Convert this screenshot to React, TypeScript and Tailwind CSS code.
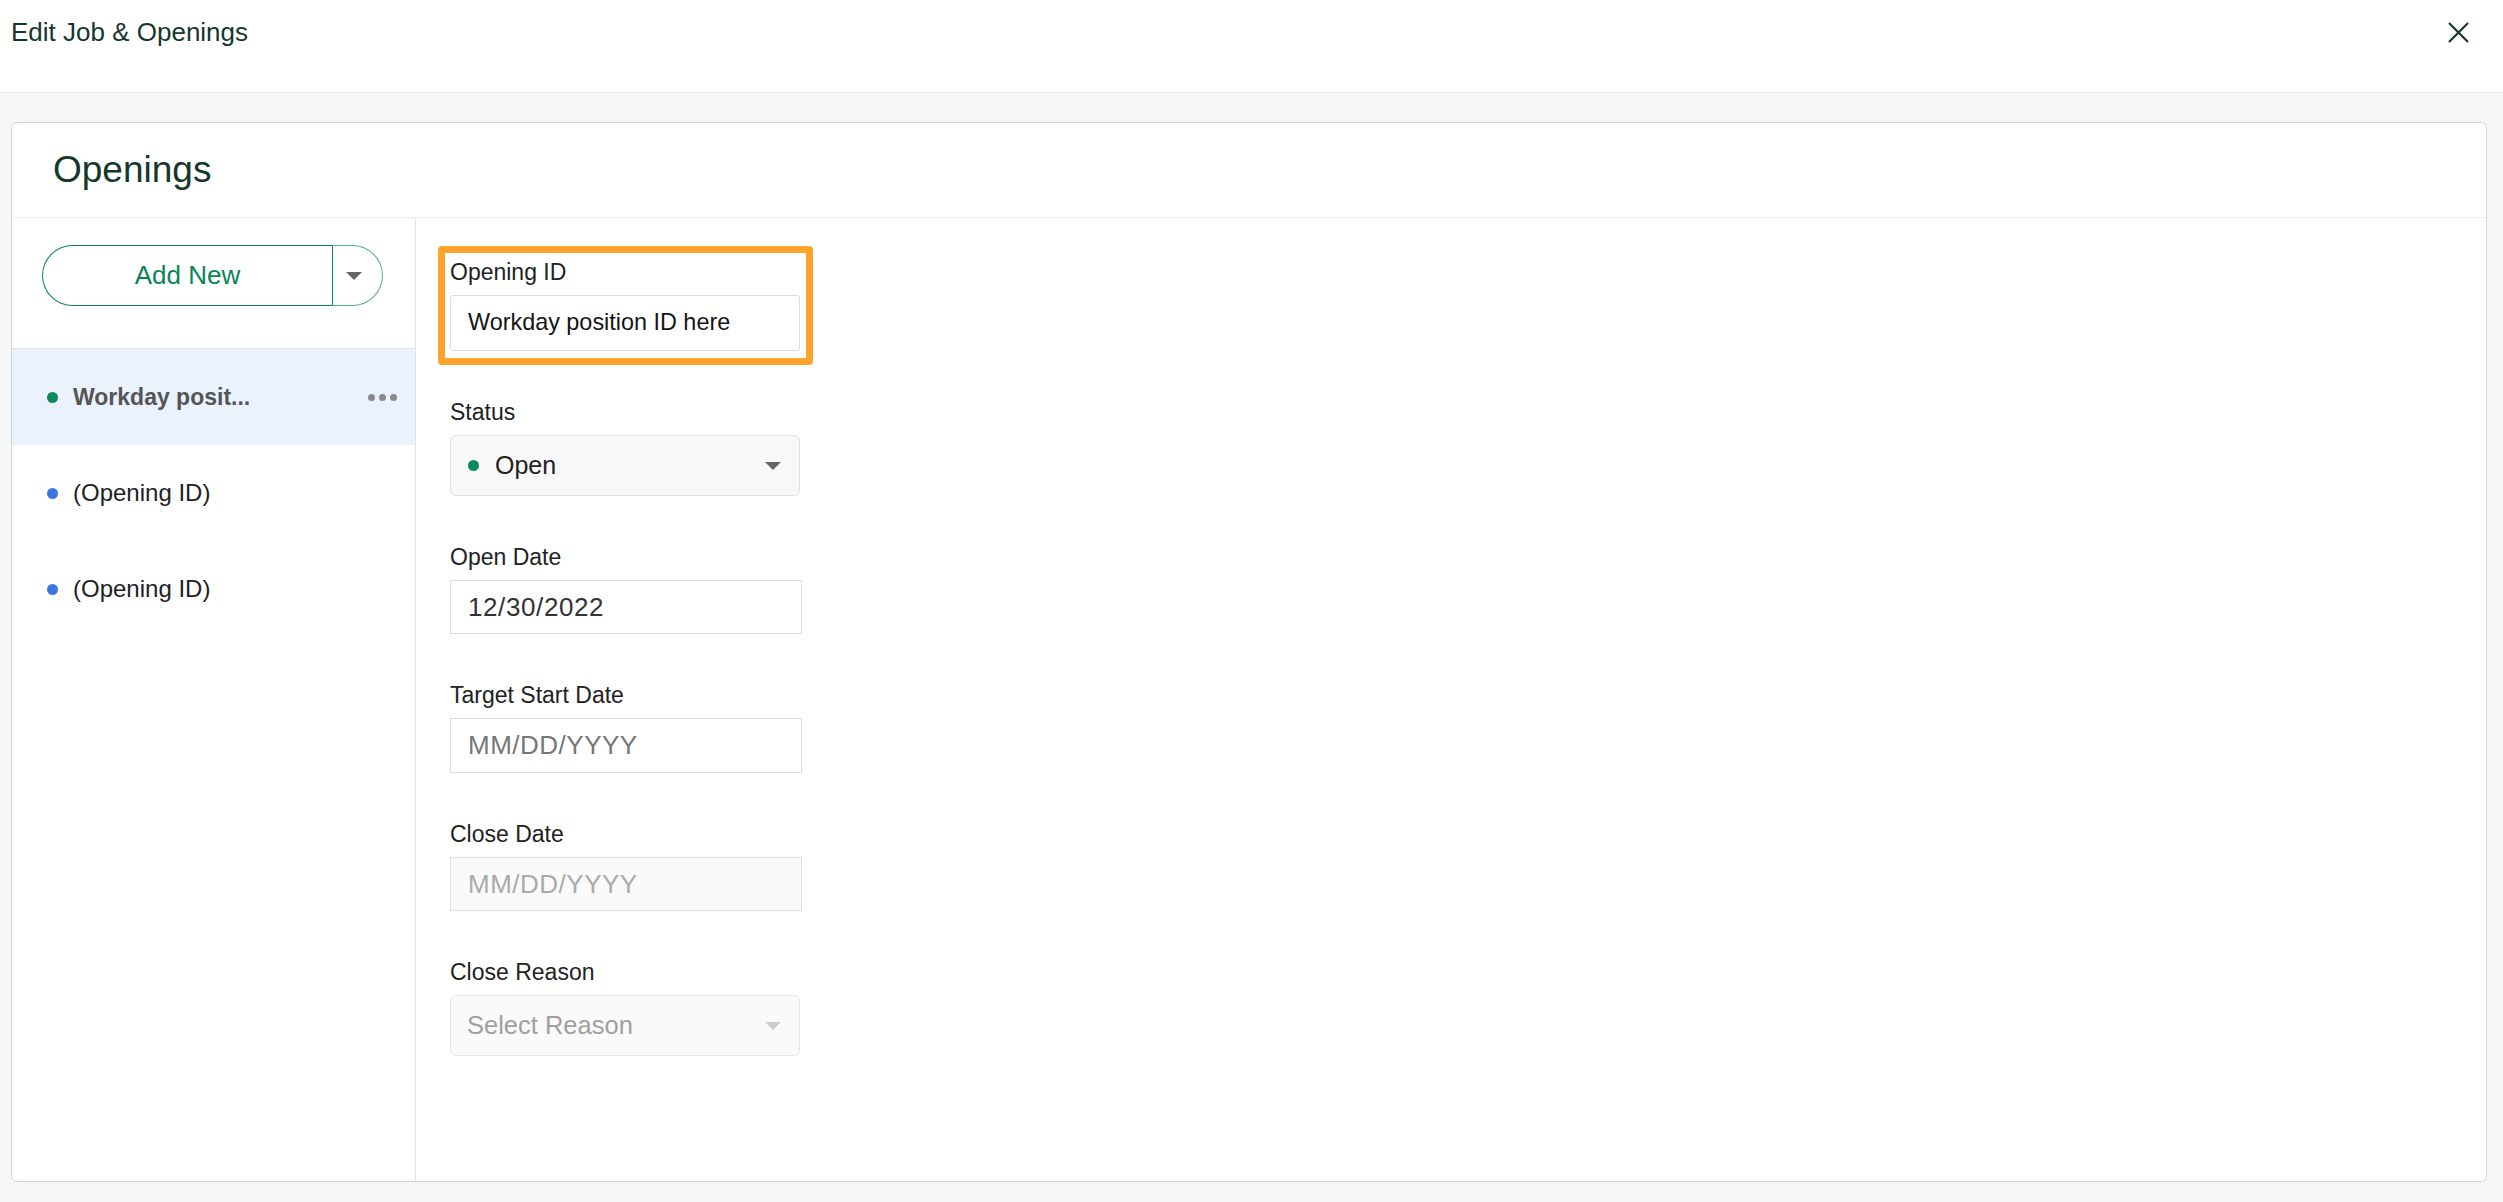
import React from "react";

const font = { fontFamily: '"Liberation Sans", Arial, Helvetica, sans-serif' };

function Caret({ color = "#666666" }: { color?: string }) {
  return (
    <svg width="16" height="8" viewBox="0 0 16 8" className="shrink-0">
      <polygon points="0,0 16,0 8,8" fill={color} />
    </svg>
  );
}

type Opening = {
  id: number;
  label: string;
  dot: string;
  selected?: boolean;
};

const openings: Opening[] = [
  { id: 1, label: "Workday posit...", dot: "bg-[#0b8a5d]", selected: true },
  { id: 2, label: "(Opening ID)", dot: "bg-[#3b76e0]" },
  { id: 3, label: "(Opening ID)", dot: "bg-[#3b76e0]" },
];

function Label({ children }: { children: React.ReactNode }) {
  return (
    <div className="mb-[9px] text-[23px] leading-[28px] text-[#222222]">
      {children}
    </div>
  );
}

export default function App() {
  return (
    <div
      style={font}
      className="flex h-[1202px] w-full flex-col bg-[#f7f7f7]"
    >
      {/* top bar */}
      <div className="flex h-[93px] shrink-0 items-start justify-between border-b border-[#ececec] bg-white pl-[11px] pr-[34px]">
        <div className="pt-[17px] text-[26px] leading-[30px] text-[#15372c]">
          Edit Job &amp; Openings
        </div>
        <button type="button" className="mt-[22px] h-[21px] w-[21px]">
          <svg viewBox="0 0 21 21" width="21" height="21">
            <path
              d="M1 1L20 20M20 1L1 20"
              stroke="#15372c"
              strokeWidth="2.2"
              fill="none"
            />
          </svg>
        </button>
      </div>

      {/* card */}
      <div className="mb-[20px] ml-[11px] mr-[16px] mt-[29px] flex flex-1 flex-col rounded-[6px] border border-[#d3d8d6] bg-white">
        <div className="h-[95px] shrink-0 border-b border-[#ededed] pl-[41px] pt-[27px] text-[37px] leading-[40px] text-[#15372c]">
          Openings
        </div>

        <div className="flex flex-1">
          {/* sidebar */}
          <div className="w-[404px] shrink-0 border-r border-[#e3e3e3]">
            <div className="ml-[30px] mt-[27px] flex h-[61px] w-[341px]">
              <button
                type="button"
                className="flex h-full w-[290px] items-center justify-center rounded-l-full border border-r-0 border-[#0a8456] text-[26px] text-[#0a8456]"
              >
                Add New
              </button>
              <button
                type="button"
                className="flex h-full w-[51px] items-center justify-start rounded-r-full border border-l-[#0a8456] border-y-[#5aae8f] border-r-[#5aae8f] pl-[13px]"
              >
                <Caret />
              </button>
            </div>

            <div className="mt-[42px] border-t border-[#e2e2e2]">
              {openings.map((o) => (
                <div
                  key={o.id}
                  className={`flex h-[96px] items-center pl-[35px] pr-[18px] ${
                    o.selected ? "bg-[#eaf2fd]" : ""
                  }`}
                >
                  <span className={`h-[11px] w-[11px] rounded-full ${o.dot}`} />
                  <span
                    className={`ml-[15px] flex-1 ${
                      o.selected
                        ? "text-[23px] font-bold text-[#555555]"
                        : "text-[24px] text-[#222222]"
                    }`}
                  >
                    {o.label}
                  </span>
                  {o.selected && (
                    <span className="flex items-center gap-[4px]">
                      <span className="h-[7px] w-[7px] rounded-full bg-[#8a8a8a]" />
                      <span className="h-[7px] w-[7px] rounded-full bg-[#8a8a8a]" />
                      <span className="h-[7px] w-[7px] rounded-full bg-[#8a8a8a]" />
                    </span>
                  )}
                </div>
              ))}
            </div>
          </div>

          {/* form */}
          <div className="flex flex-1 flex-col gap-[47px] pl-[34px] pt-[40px]">
            <div className="relative w-[350px]">
              <div className="pointer-events-none absolute -bottom-[14px] -left-[12px] -right-[13px] -top-[12px] rounded-[4px] border-[7px] border-[#ffa42b]" />
              <Label>Opening ID</Label>
              <div className="flex h-[56px] items-center rounded-[3px] border border-[#dcdcdc] pl-[17px] text-[23.4px] text-[#151515]">
                Workday position ID here
              </div>
            </div>

            <div className="w-[350px]">
              <Label>Status</Label>
              <div className="flex h-[61px] items-center rounded-[6px] border border-[#e0e0e0] bg-[#f8f8f8] pl-[17px] pr-[18px]">
                <span className="h-[11px] w-[11px] rounded-full bg-[#0b8a5d]" />
                <span className="ml-[16px] flex-1 text-[25px] text-[#222222]">
                  Open
                </span>
                <Caret color="#666666" />
              </div>
            </div>

            <div className="w-[352px]">
              <Label>Open Date</Label>
              <div className="flex h-[54px] items-center border border-[#dcdcdc] pl-[17px] text-[26px] tracking-[0.6px] text-[#333333]">
                12/30/2022
              </div>
            </div>

            <div className="w-[352px]">
              <Label>Target Start Date</Label>
              <div className="flex h-[55px] items-center border border-[#dcdcdc] pl-[17px] text-[26px] tracking-[0.5px] text-[#777777]">
                MM/DD/YYYY
              </div>
            </div>

            <div className="w-[352px]">
              <Label>Close Date</Label>
              <div className="flex h-[54px] items-center border border-[#e0e0e0] bg-[#fafafa] pl-[17px] text-[26px] tracking-[0.5px] text-[#aaaaaa]">
                MM/DD/YYYY
              </div>
            </div>

            <div className="w-[350px]">
              <Label>Close Reason</Label>
              <div className="flex h-[61px] items-center rounded-[6px] border border-[#e6e6e6] bg-[#fafafa] pl-[16px] pr-[18px]">
                <span className="flex-1 text-[25.5px] text-[#a0a0a0]">
                  Select Reason
                </span>
                <Caret color="#cccccc" />
              </div>
            </div>
          </div>
        </div>
      </div>
    </div>
  );
}
